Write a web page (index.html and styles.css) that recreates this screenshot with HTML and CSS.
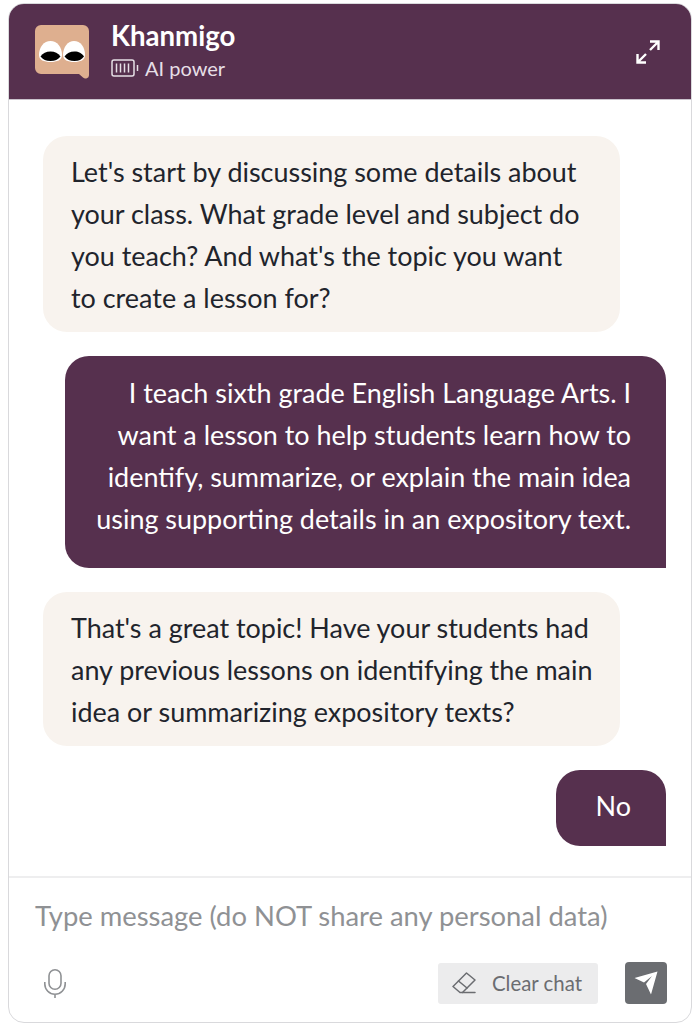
FILE: index.html
```html
<!DOCTYPE html>
<html>
<head>
    <meta charset="UTF-8">
    <title>Khanmigo</title>
    <link rel="stylesheet" href="styles.css">
</head>
<body>
    <div class="chat">
        <header class="chat-header">
            <svg class="avatar" width="54" height="54" viewBox="0 0 54 54">
                <path d="M6 0H48A6 6 0 0 1 54 6V50A3.500 3.500 0 0 1 48 52.500L44 49H6A6 6 0 0 1 0 43V6A6 6 0 0 1 6 0Z" fill="#deaf8f"/>
                <path d="M4 30C4 22 9 16 15.500 16C22 16 27 22 27 30C27 35 22 37 15.500 37C9 37 4 35 4 30Z" fill="#fff"/>
                <path d="M28 30C28 22 33 16 39 16C45.500 16 50 22 50 30C50 35 45.500 37 39 37C33 37 28 35 28 30Z" fill="#fff"/>
                <path d="M5.500 31.500C8 28 11 26.500 15.500 26.500C20 26.500 23 28 25.500 31.500C23 34.500 20 36 15.500 36C11 36 8 34.500 5.500 31.500Z" fill="#000"/>
                <path d="M29.500 31.500C32 28 35 26.500 39.500 26.500C44 26.500 46.500 28 49 31.500C46.500 34.500 44 36 39.500 36C35 36 32 34.500 29.500 31.500Z" fill="#000"/>
            </svg>
            <div class="title-block">
                <div class="title">Khanmigo</div>
                <div class="power">
                    <svg width="28" height="18" viewBox="0 0 28 18" fill="none" stroke="#e6dfe6" stroke-width="1.500">
                        <rect x="1" y="1" width="22" height="16" rx="2"/>
                        <path d="M5.500 4.500V13.500M9.500 4.500V13.500M13.500 4.500V13.500M17.500 4.500V13.500M26.500 6V12"/>
                    </svg>
                    <span>AI power</span>
                </div>
            </div>
            <svg class="expand" width="24" height="24" viewBox="0 0 24 24" fill="none" stroke="#fff" stroke-width="2.400">
                <path d="M14 10L22 2M14 1.500H22.500V10M10 14L2 22M1.500 14V22.500H10"/>
            </svg>
        </header>

        <main class="messages">
            <div class="bubble bot">Let's start by discussing some details about your class. What grade level and subject do you teach? And what's the topic you want to create a lesson for?</div>
            <div class="bubble user">I teach sixth grade English Language Arts. I want a lesson to help students learn how to identify, summarize, or explain the main idea using supporting details in an expository text.</div>
            <div class="bubble bot wide">That's a great topic! Have your students had any previous lessons on identifying the main idea or summarizing expository texts?</div>
            <div class="bubble user short">No</div>
        </main>

        <footer class="composer">
            <div class="placeholder">Type message (do NOT share any personal data)</div>
            <div class="actions">
                <svg class="mic" width="22" height="29" viewBox="0 0 22 29" fill="none" stroke="#8f9194" stroke-width="1.600">
                    <rect x="5" y="0.800" width="12" height="19.500" rx="6"/>
                    <path d="M0.800 13V15A10.200 10.200 0 0 0 21.200 15V13M11 25.500V29"/>
                </svg>
                <button class="clear">
                    <svg width="24" height="22" viewBox="0 0 24 22" fill="none" stroke="#6b6d71" stroke-width="1.500" stroke-linejoin="round" stroke-linecap="round">
                        <path d="M14.500 1L23 8L10.500 20.500H8L1 14.500Z"/>
                        <path d="M6.500 9L15 16M10.500 20.500H23"/>
                    </svg>
                    <span>Clear chat</span>
                </button>
                <button class="send">
                    <svg width="24" height="24" viewBox="0 0 24 24">
                        <path d="M23.500 0.500L0.500 7L10 11.500L18 5L12 13L17 23.500Z" fill="#fff"/>
                    </svg>
                </button>
            </div>
        </footer>
    </div>
</body>
</html>
```

FILE: styles.css
```css
* {
    box-sizing: border-box;
}
html, body {
    height: 100%;
}
body {
    margin: 0;
    padding: 3px 7px 1px 8px;
    font-family: Lato, "Liberation Sans", sans-serif;
    background: #fff;
}
.chat {
    height: 1020px;
    display: flex;
    flex-direction: column;
    background: #fff;
    border: 1px solid #d9d9dc;
    border-radius: 16px;
    overflow: hidden;
}
.chat-header {
    height: 96px;
    flex: none;
    display: flex;
    align-items: center;
    padding: 0 31px 0 26px;
    background: #56304e;
    color: #fff;
    border-bottom: 1px solid #c9c2cc;
}
.avatar {
    flex: none;
}
.title-block {
    margin-left: 22px;
    margin-top: -3px;
    flex: 1;
}
.title {
    font-size: 27.600px;
    font-weight: 700;
    line-height: 34px;
}
.power {
    display: flex;
    align-items: center;
    gap: 6px;
    margin-top: 2px;
    font-size: 20px;
    line-height: 26px;
    color: #e6dfe6;
}
.messages {
    flex: 1;
    display: flex;
    flex-direction: column;
    gap: 24px;
    padding: 36px 25px 0 34px;
}
.bubble {
    font-size: 26.950px;
    line-height: 42px;
    border-radius: 24px;
}
.bot {
    width: 577px;
    padding: 15px 26.500px 13px 28px;
    background: #f8f3ee;
    color: #21242c;
}
.wide {
    padding-right: 20px;
}
.user {
    align-self: flex-end;
    width: 601px;
    padding: 16px 35px 28px 28px;
    background: #56304e;
    color: #fff;
    text-align: right;
    border-bottom-right-radius: 0;
}
.short {
    width: 110px;
    padding: 15px 35px 19px 0;
}
.composer {
    height: 146px;
    flex: none;
    border-top: 2px solid #eeeeef;
    padding: 18px 24px 0 26px;
}
.placeholder {
    font-size: 27.400px;
    line-height: 40px;
    color: #8f9194;
}
.actions {
    display: flex;
    align-items: center;
    margin-top: 26px;
}
.mic {
    margin-left: 9px;
    margin-right: auto;
}
.clear {
    width: 160px;
    height: 41px;
    display: flex;
    align-items: center;
    gap: 16px;
    padding: 0 0 0 14px;
    border: 0;
    border-radius: 3px;
    background: #ececed;
    color: #6b6d71;
    font: 20.400px Lato, "Liberation Sans", sans-serif;
}
.send {
    width: 42px;
    height: 42px;
    margin-left: 27px;
    display: flex;
    align-items: center;
    justify-content: center;
    padding: 0;
    border: 0;
    border-radius: 4px;
    background: #6b6d71;
}
```
